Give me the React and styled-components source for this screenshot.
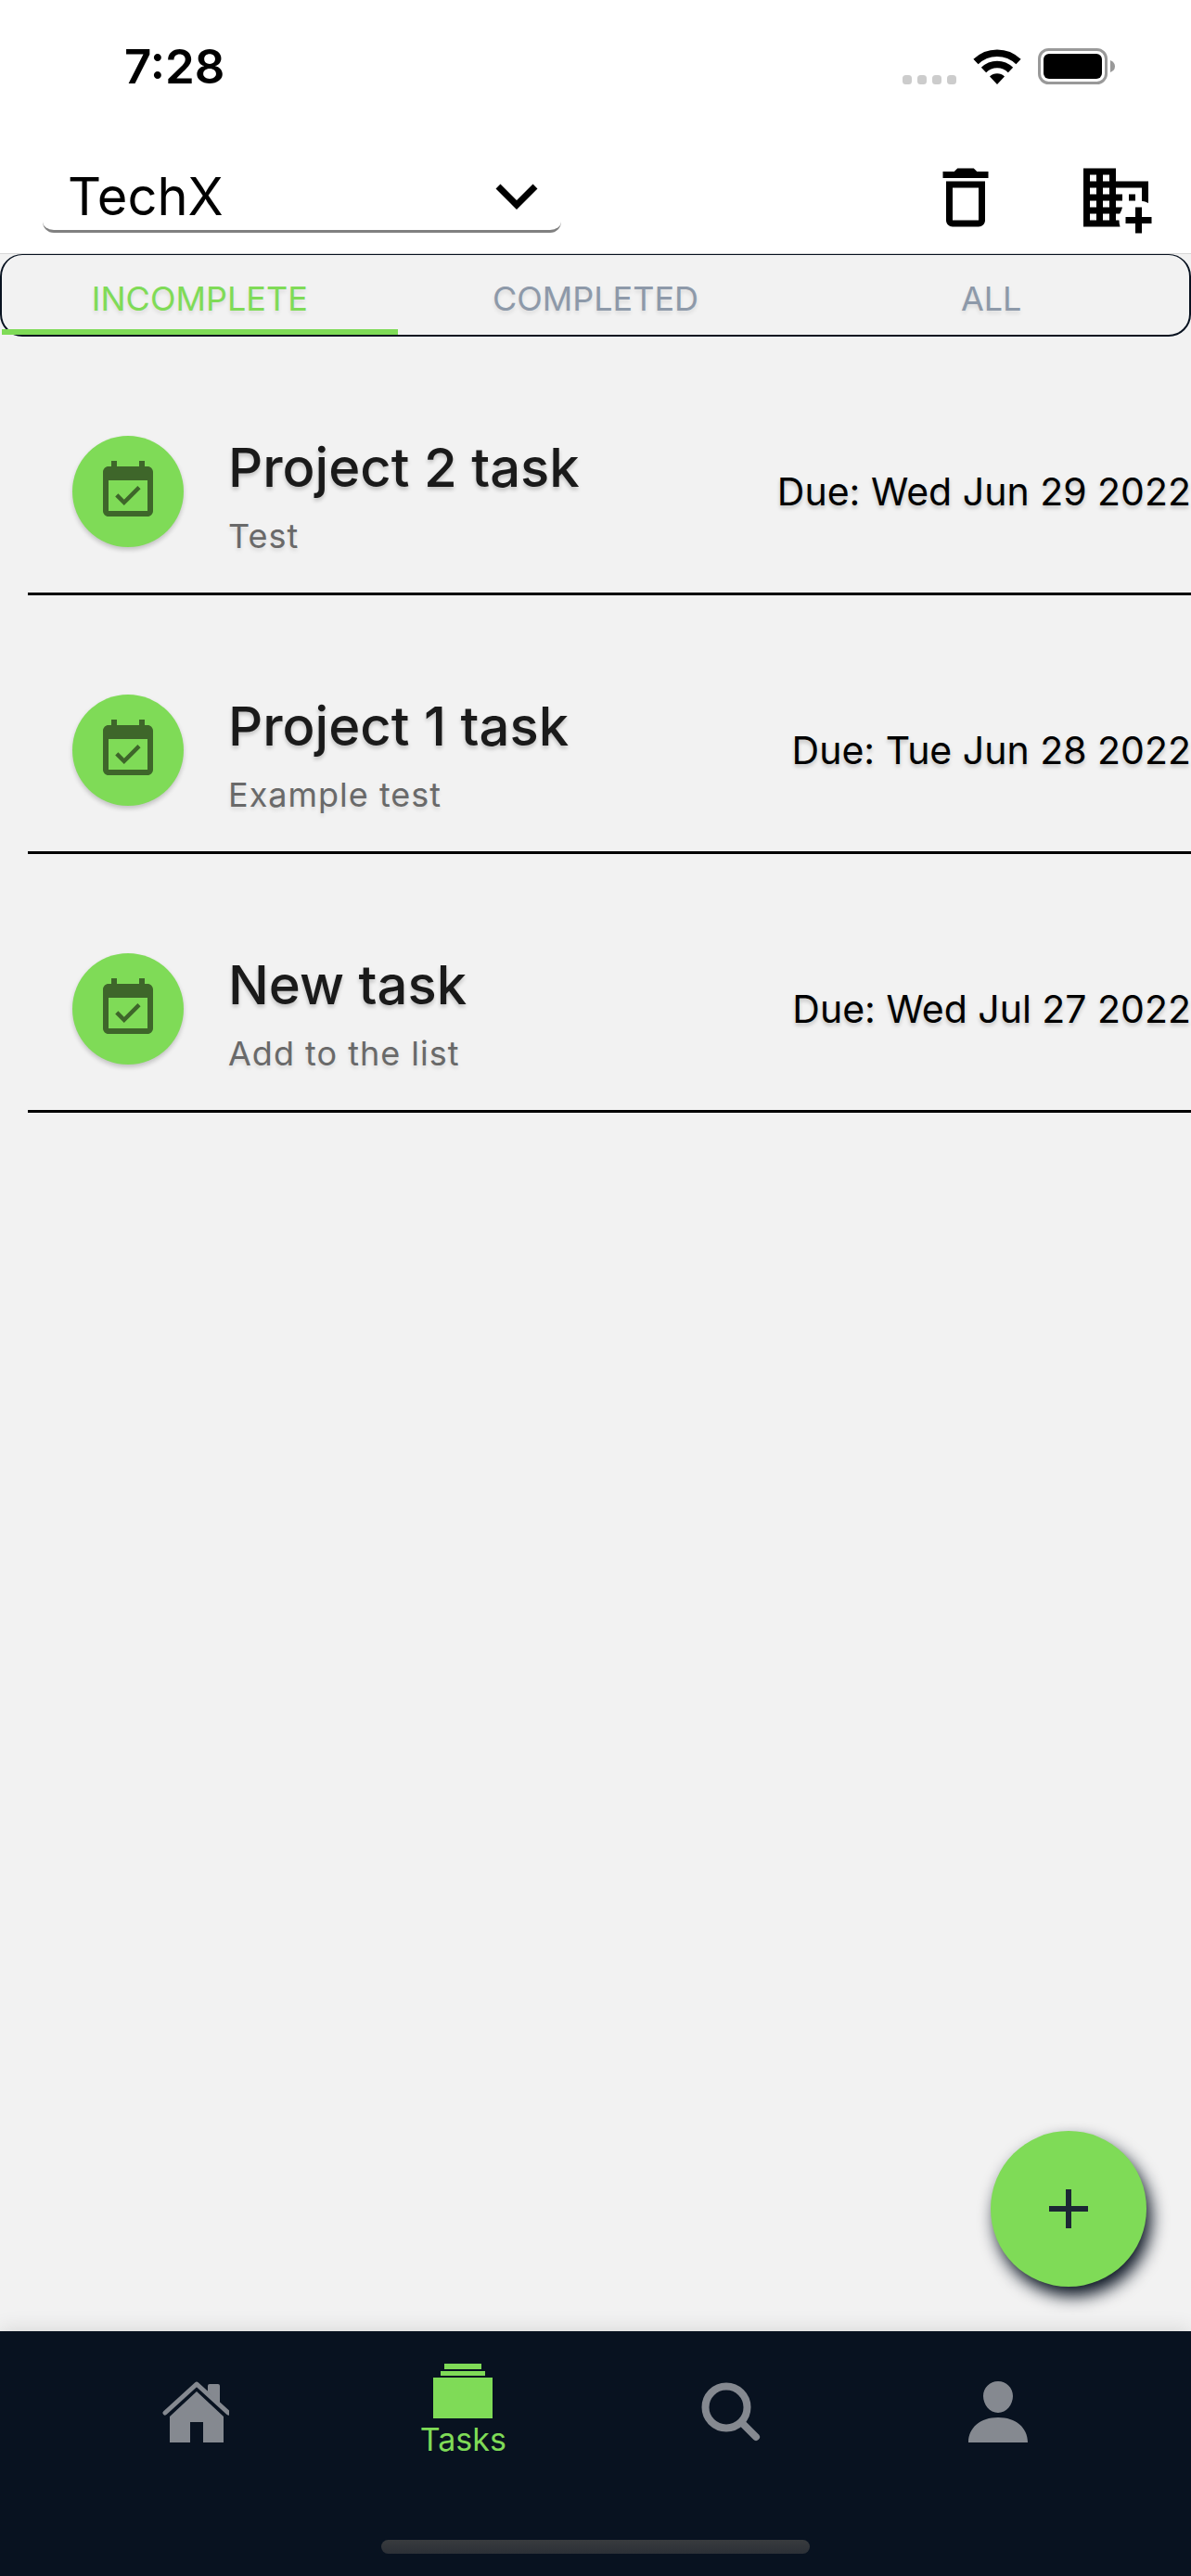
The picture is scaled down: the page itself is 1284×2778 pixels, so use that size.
import React, { useState } from "react";
import styled, { createGlobalStyle } from "styled-components";

const green = "#7fdb57";
const navy = "#081220";
const grey = "#858990";

const GlobalStyle = createGlobalStyle`
  *, *::before, *::after { box-sizing: border-box; }
  html, body, #root { height: 100%; }
  body {
    margin: 0;
    background: #f2f2f2;
    font-family: Inter, "Liberation Sans", sans-serif;
    color: #000;
  }
  button, select { font: inherit; color: inherit; }
`;

const Screen = styled.div`
  min-height: 100%;
  display: flex;
  flex-direction: column;
  background: #f2f2f2;
`;

const Header = styled.header`
  background: #fff;
  border-bottom: 1px solid #d8d8d8;
`;

const StatusBar = styled.div`
  display: flex;
  justify-content: space-between;
  align-items: center;
  height: 144px;
  padding: 0 81px 0 134px;
`;

const Clock = styled.time`
  font-size: 51px;
  line-height: 60px;
  font-weight: 600;
`;

const StatusIcons = styled.div`
  display: flex;
  align-items: center;
  gap: 18px;
`;

const Toolbar = styled.div`
  display: flex;
  align-items: flex-end;
  justify-content: space-between;
  height: 129px;
  padding: 0 39px 18px 46px;
`;

const PickerBox = styled.label`
  display: flex;
  align-items: center;
  width: 559px;
  height: 75px;
  margin-bottom: 4px;
  padding: 0 25px 0 27px;
  border-bottom: 3px solid #808080;
  border-radius: 12px;
`;

const Picker = styled.select`
  flex: 1;
  appearance: none;
  border: 0;
  padding: 0;
  background: transparent;
  font-size: 56px;
  line-height: 72px;
  outline: none;
`;

const Actions = styled.div`
  display: flex;
  gap: 78px;
`;

const IconButton = styled.button`
  display: flex;
  padding: 0;
  border: 0;
  background: none;
`;

const Tabs = styled.div`
  display: grid;
  grid-template-columns: repeat(3, 1fr);
  height: 89px;
  border: 2px solid ${navy};
  border-top-width: 1px;
  border-radius: 24px;
`;

const Tab = styled.button`
  padding: 14px 0 0;
  border: 0;
  border-bottom: 6px solid ${(p) => (p.$active ? green : "transparent")};
  background: none;
  color: ${(p) => (p.$active ? green : "#8d99a9")};
  font-size: 36px;
  line-height: 44px;
  text-shadow: 0 3px 4px rgba(0, 0, 0, 0.1);
`;

const TaskList = styled.ul`
  flex: 1;
  list-style: none;
  margin: 0;
  padding: 0 0 0 30px;
`;

const TaskRow = styled.li`
  display: flex;
  align-items: center;
  height: 279px;
  padding: 57px 0 0 48px;
  border-bottom: 3px solid #000;
`;

const Avatar = styled.span`
  display: flex;
  align-items: center;
  justify-content: center;
  flex: none;
  width: 120px;
  height: 120px;
  border-radius: 50%;
  background: ${green};
  box-shadow: 0 3px 5px rgba(0, 0, 0, 0.2);
`;

const TaskText = styled.div`
  flex: 1;
  display: flex;
  flex-direction: column;
  gap: 14px;
  padding: 6px 0 0 48px;
`;

const TaskTitle = styled.h2`
  margin: 0;
  font-size: 58px;
  line-height: 76px;
  font-weight: 500;
  color: #1a1a1a;
  text-shadow: 0 3px 4px rgba(0, 0, 0, 0.2);
`;

const TaskNote = styled.p`
  margin: 0;
  font-size: 36px;
  line-height: 44px;
  letter-spacing: 1px;
  color: #696969;
  text-shadow: 0 3px 4px rgba(0, 0, 0, 0.1);
`;

const Due = styled.span`
  flex: none;
  font-size: 41px;
  line-height: 52px;
  text-shadow: 0 3px 4px rgba(0, 0, 0, 0.2);
`;

const Footer = styled.footer`
  position: relative;
  display: flex;
  flex-direction: column;
  justify-content: space-between;
  height: 264px;
  background: ${navy};
  box-shadow: 0 -3px 20px rgba(0, 0, 0, 0.1);
`;

const AddButton = styled.button`
  position: absolute;
  right: 48px;
  bottom: calc(100% + 48px);
  display: flex;
  align-items: center;
  justify-content: center;
  width: 168px;
  height: 168px;
  padding: 0;
  border: 0;
  border-radius: 50%;
  background: ${green};
  box-shadow: 5px 10px 18px ${navy};
`;

const Nav = styled.nav`
  display: grid;
  grid-template-columns: repeat(4, 1fr);
  height: 174px;
  padding: 0 64px 0 67px;
`;

const NavLink = styled.a`
  display: flex;
  flex-direction: column;
  align-items: center;
  justify-content: center;
  color: ${(p) => (p.$active ? green : grey)};
  font-size: 34px;
  line-height: 44px;
  text-decoration: none;
`;

const HomeIndicator = styled.div`
  align-self: center;
  width: 36%;
  height: 15px;
  margin-bottom: 24px;
  border-radius: 8px;
  background: linear-gradient(#383b3e, #2c3037);
`;

const SignalIcon = () => (
  <svg width="58" height="38" viewBox="0 0 58 38" fill="#ccc" aria-hidden="true">
    {[0, 16, 32, 48].map((x) => (
      <rect key={x} x={x} y="28" width="10" height="10" rx="3.500" />
    ))}
  </svg>
);

const WifiIcon = () => (
  <svg width="52" height="38" viewBox="0 0 52 38" aria-hidden="true">
    <g fill="none" stroke="#000" strokeWidth="7.5">
      <path d="M3 13.5a33 33 0 0 1 46 0" />
      <path d="M11.500 22.500a20.500 20.500 0 0 1 29 0" />
    </g>
    <path d="M26 38l-8-8.500a11.500 11.500 0 0 1 16 0z" />
  </svg>
);

const BatteryIcon = () => (
  <svg width="84" height="40" viewBox="0 0 84 40" aria-hidden="true">
    <rect x="1.500" y="1.500" width="72" height="36" rx="10" fill="none" stroke="#999" strokeWidth="3" />
    <rect x="6" y="6" width="63" height="27" rx="6" />
    <path d="M78 13q5 2 5 6.500t-5 6.500z" fill="#999" />
  </svg>
);

const ChevronIcon = () => (
  <svg width="46" height="28" viewBox="0 0 46 28" fill="none" stroke="#000" strokeWidth="7" aria-hidden="true">
    <path d="M3 3l20 20L43 3" />
  </svg>
);

const TrashIcon = () => (
  <svg width="84" height="84" viewBox="0 0 24 24" aria-hidden="true">
    <path d="M6 19c0 1.100.9 2 2 2h8c1.100 0 2-.9 2-2V7H6v12zM8 9h8v10H8V9zm7.500-5l-1-1h-5l-1 1H5v2h14V4z" />
  </svg>
);

const DomainAddIcon = () => (
  <svg width="84" height="84" viewBox="0 0 24 24" aria-hidden="true">
    <path
      fillRule="evenodd"
      d="M2 3h10v4h10v6.700a6 6 0 0 0-2-.6V9h-8v2h2v2h-2v2h2a6 6 0 0 1-.8 2H12v2h1a6 6 0 0 0 .3 2H2zM4 5v2h2V5zM8 5v2h2V5zM4 9v2h2V9zM8 9v2h2V9zM4 13v2h2v-2zM8 13v2h2v-2zM4 17v2h2v-2zM8 17v2h2v-2zM16 11h2v2h-2z"
    />
    <path d="M18 15h2v3h3v2h-3v3h-2v-3h-3v-2h3z" />
  </svg>
);

const CalendarIcon = () => (
  <svg width="72" height="72" viewBox="0 0 24 24" fill="#3e662a" aria-hidden="true">
    <path d="M16.530 11.060L15.470 10l-4.880 4.880-2.120-2.120-1.060 1.060L10.590 17l5.940-5.940zM19 3h-1V1h-2v2H8V1H6v2H5c-1.110 0-1.990.9-1.990 2L3 19c0 1.100.89 2 2 2h14c1.100 0 2-.9 2-2V5c0-1.100-.9-2-2-2zm0 16H5V8h14v11z" />
  </svg>
);

const PlusIcon = () => (
  <svg width="42" height="42" viewBox="0 0 42 42" fill="#1c2734" aria-hidden="true">
    <path d="M18 0h6v18h18v6H24v18h-6V24H0v-6h18z" />
  </svg>
);

const HomeIcon = () => (
  <svg width="72" height="66" viewBox="0 0 72 66" fill="currentColor" aria-hidden="true">
    <path d="M37 11L66 38v28H44V44H30v22H8V38z" />
    <path d="M3 34L37 3l34 31" fill="none" stroke="currentColor" strokeWidth="5" strokeLinecap="round" strokeLinejoin="round" />
    <path d="M49 11V5q0-2 2-2h9q2 0 2 2v20z" />
  </svg>
);

const StackIcon = () => (
  <svg width="64" height="60" viewBox="0 0 64 60" fill="currentColor" aria-hidden="true">
    <path d="M12 0h40v6H12zM8 8h48v5H8zM0 15h64v44H0z" />
  </svg>
);

const SearchIcon = () => (
  <svg width="64" height="64" viewBox="0 0 64 64" fill="none" stroke="currentColor" strokeWidth="8" strokeLinecap="round" aria-hidden="true">
    <circle cx="27" cy="27" r="22.500" />
    <path d="M44 44l15 15" />
  </svg>
);

const PersonIcon = () => (
  <svg width="64" height="66" viewBox="0 0 64 66" fill="currentColor" aria-hidden="true">
    <path d="M32 0c9 0 16 7 16 16s-7 18-16 18-16-9-16-18S23 0 32 0zM0 66c0-16 13-27 32-27s32 11 32 27z" />
  </svg>
);

const tasks = [
  { title: "Project 2 task", note: "Test", due: "Wed Jun 29 2022" },
  { title: "Project 1 task", note: "Example test", due: "Tue Jun 28 2022" },
  { title: "New task", note: "Add to the list", due: "Wed Jul 27 2022" },
];

const filters = ["INCOMPLETE", "COMPLETED", "ALL"];

export default function App() {
  const [filter, setFilter] = useState("INCOMPLETE");
  return (
    <Screen>
      <GlobalStyle />
      <Header>
        <StatusBar>
          <Clock>7:28</Clock>
          <StatusIcons>
            <SignalIcon />
            <WifiIcon />
            <BatteryIcon />
          </StatusIcons>
        </StatusBar>
        <Toolbar>
          <PickerBox>
            <Picker aria-label="Company">
              <option>TechX</option>
            </Picker>
            <ChevronIcon />
          </PickerBox>
          <Actions>
            <IconButton aria-label="Delete company"><TrashIcon /></IconButton>
            <IconButton aria-label="Add company"><DomainAddIcon /></IconButton>
          </Actions>
        </Toolbar>
      </Header>
      <Tabs role="tablist">
        {filters.map((name) => (
          <Tab
            key={name}
            role="tab"
            aria-selected={name === filter}
            $active={name === filter}
            onClick={() => setFilter(name)}
          >
            {name}
          </Tab>
        ))}
      </Tabs>
      <TaskList>
        {tasks.map((task) => (
          <TaskRow key={task.title}>
            <Avatar><CalendarIcon /></Avatar>
            <TaskText>
              <TaskTitle>{task.title}</TaskTitle>
              <TaskNote>{task.note}</TaskNote>
            </TaskText>
            <Due>Due: {task.due}</Due>
          </TaskRow>
        ))}
      </TaskList>
      <Footer>
        <AddButton aria-label="Add task"><PlusIcon /></AddButton>
        <Nav>
          <NavLink href="#home" aria-label="Home"><HomeIcon /></NavLink>
          <NavLink href="#tasks" aria-current="page" $active>
            <StackIcon />
            Tasks
          </NavLink>
          <NavLink href="#search" aria-label="Search"><SearchIcon /></NavLink>
          <NavLink href="#profile" aria-label="Profile"><PersonIcon /></NavLink>
        </Nav>
        <HomeIndicator />
      </Footer>
    </Screen>
  );
}
